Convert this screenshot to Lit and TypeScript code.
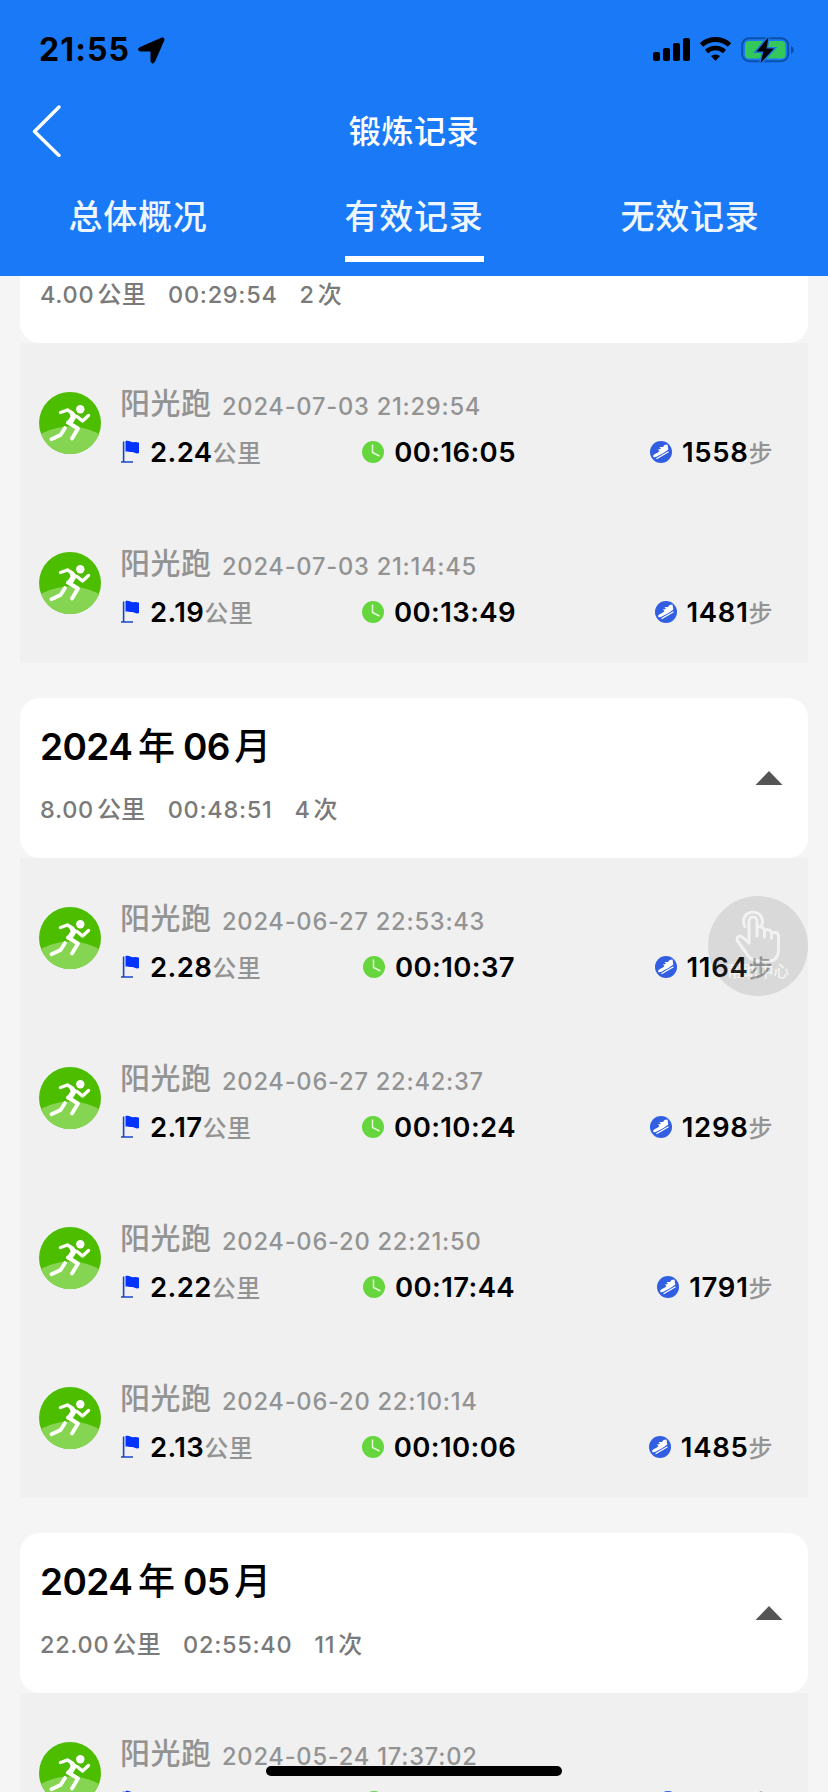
import { LitElement, html, css, svg, nothing } from "lit";
import { customElement, property } from "lit/decorators.js";
import { classMap } from "lit/directives/class-map.js";

interface Run { date: string; km: string; time: string; steps: string; }
interface Month { title?: [string, string]; km: string; time: string; count: string; runs: Run[]; }

// A month without a title is scrolled partly under the header: only its summary line shows.
const MONTHS: Month[] = [
  { km: "4.00", time: "00:29:54", count: "2", runs: [
    { date: "2024-07-03 21:29:54", km: "2.24", time: "00:16:05", steps: "1558" },
    { date: "2024-07-03 21:14:45", km: "2.19", time: "00:13:49", steps: "1481" },
  ] },
  { title: ["2024", "06"], km: "8.00", time: "00:48:51", count: "4", runs: [
    { date: "2024-06-27 22:53:43", km: "2.28", time: "00:10:37", steps: "1164" },
    { date: "2024-06-27 22:42:37", km: "2.17", time: "00:10:24", steps: "1298" },
    { date: "2024-06-20 22:21:50", km: "2.22", time: "00:17:44", steps: "1791" },
    { date: "2024-06-20 22:10:14", km: "2.13", time: "00:10:06", steps: "1485" },
  ] },
  { title: ["2024", "05"], km: "22.00", time: "02:55:40", count: "11", runs: [
    { date: "2024-05-24 17:37:02", km: "2.05", time: "00:15:32", steps: "1517" },
  ] },
];

const runner = svg`<svg width="62" height="62" viewBox="0 0 62 62">
  <circle cx="31" cy="31" r="31" fill="#4dbd00"/>
  <path d="M2 42C20 32 42 32 60 42A31 31 0 0 1 2 42Z" fill="#85d452"/>
  <circle cx="41.300" cy="17.300" r="4.200" fill="#fff"/>
  <path d="M21.500 20.500L28.500 18L34 21.500" fill="none" stroke="#fff" stroke-width="3.400" stroke-linecap="round" stroke-linejoin="round"/>
  <path d="M29 17L38.500 23.500L33 32.500L26.800 31.500L31.500 24.500Z" fill="#fff"/>
  <path d="M38 24.500L43.500 29L49.500 23.500" fill="none" stroke="#fff" stroke-width="3.400" stroke-linecap="round" stroke-linejoin="round"/>
  <path d="M29 30.500L39 36.500L33 46.500" fill="none" stroke="#fff" stroke-width="3.800" stroke-linecap="round" stroke-linejoin="round"/>
  <path d="M26 36L21.500 43L12.500 47.200" fill="none" stroke="#fff" stroke-width="3.800" stroke-linecap="round" stroke-linejoin="round"/>
</svg>`;
const flag = svg`<svg width="20" height="24" viewBox="0 0 20 24">
  <path d="M2.600 1.500V22M0 22H12" fill="none" stroke="#1a44c8" stroke-width="1.600"/>
  <path d="M4.500 1C8-.2 10 2.800 13 2.200C15 1.800 16.500 2.500 18 2.700V13C15.500 14.500 13.500 12 11 12C8.500 12 7 11.500 4.500 11.500Z" fill="#0433ff"/>
</svg>`;
const clock = svg`<svg width="22" height="22" viewBox="0 0 22 22">
  <circle cx="11" cy="11" r="11" fill="#65d63e"/>
  <path d="M10.500 3.500V11.500L17.500 15" fill="none" stroke="#e4fbd9" stroke-width="1.500"/>
</svg>`;
const shoe = svg`<svg width="22" height="22" viewBox="0 0 22 22">
  <circle cx="11" cy="11" r="11" fill="#325fe2"/>
  <path d="M3 15C4 12.500 7.800 12.500 9.500 10L7.800 8.500L11 8L9.500 6L13 6L14.500 4L17.500 3.500L18.300 8.500C15 11.500 10.500 13.500 6.500 15.800C5 16.600 3 16.500 3 15Z" fill="#fff"/>
  <path d="M6.500 17.800L18.500 10.800" stroke="#fff" stroke-width="1.300"/>
</svg>`;

@customElement("status-bar")
export class StatusBar extends LitElement {
  static styles = css`
    :host { display: flex; justify-content: space-between; align-items: center; height: 100px; padding: 0 20px 0 39px; box-sizing: border-box; }
    .side { display: flex; align-items: center; }
    .time { font: 700 32px/40px Inter, sans-serif; color: #000; letter-spacing: 1.1px; width: 99px; }
  `;
  render() {
    return html`
      <div class="side">
        <span class="time">21:55</span>
        <svg width="27" height="27" viewBox="0 0 27 27"><path d="M23.600 1.100L2 10.600C-.2 11.600.1 14 2.600 14H12.300Q13 14 13 14.700V23.800C13 26.500 15.500 26.800 16.600 24.500L25.800 3.300C26.500 1.500 25.300.4 23.600 1.100Z" fill="#000" stroke="#000" stroke-width="1"/></svg>
      </div>
      <div class="side">
        <svg width="155" height="26" viewBox="0 0 155 26">
          <rect x="0" y="15" width="7" height="9" rx="2"/><rect x="10" y="11" width="7" height="13" rx="2"/><rect x="20" y="6" width="7" height="18" rx="2"/><rect x="30" y="1" width="7" height="23" rx="2"/>
          <path d="M48.500 8A20.500 20.500 0 0 1 76.500 8" fill="none" stroke="#000" stroke-width="5"/>
          <path d="M53.500 14.500A13.500 13.500 0 0 1 71.500 14.500" fill="none" stroke="#000" stroke-width="4.600"/>
          <path d="M58 19Q62.500 16 67 19L62.500 24Z" />
          <rect x="89.200" y="1.200" width="46" height="23" rx="7" fill="none" stroke="#0d50ac" stroke-width="2"/>
          <rect x="92" y="4" width="40.500" height="17.500" rx="4" fill="#34c759"/>
          <path d="M138 9Q141 10.500 141 13Q141 15.500 138 17Z" fill="#0d50ac"/>
          <path d="M115.500 0L103.500 14.500H110.500L107.500 26L121 11.500H113.500Z" fill="#000" stroke="#1c78e0" stroke-width="3" paint-order="stroke"/>
        </svg>
      </div>`;
  }
}

@customElement("run-row")
export class RunRow extends LitElement {
  @property({ attribute: false }) run!: Run;
  static styles = css`
    :host { display: flex; gap: 20px; height: 160px; box-sizing: border-box; padding: 43px 35px 0 19px; }
    .badge { padding-top: 6px; height: 62px; }
    .badge svg, .cell svg { display: block; }
    .body { flex: 1; margin-top: -3px; }
    .head { display: flex; height: 37px; align-items: flex-start; color: #939393; white-space: nowrap; }
    .kind { font: 500 30px/44px "Noto Sans CJK SC", sans-serif; letter-spacing: 0.5px; width: 102px; margin: -4px 0 0 -1px; }
    .date { font: 500 23.700px/36px Inter, sans-serif; letter-spacing: 0.75px; margin-top: 6px; }
    .stats { display: grid; grid-template-columns: 207px 222px 1fr; height: 46px; margin-top: 9px; }
    .cell { display: flex; align-items: center; }
    .mid { justify-content: center; }
    .end { justify-content: flex-end; }
    .num { font: 600 27.500px/40px Inter, sans-serif; color: #000; margin-left: 10px; letter-spacing: 0.4px; }
    .first { margin-left: 9px; }
    .end .num { letter-spacing: 0.7px; }
    .unit { font: 500 24px/40px "Noto Sans CJK SC", sans-serif; color: #939393; letter-spacing: 0.5px; margin-top: -1px; }
  `;
  render() {
    const r = this.run;
    return html`
      <div class="badge">${runner}</div>
      <div class="body">
        <div class="head"><span class="kind">阳光跑</span><span class="date">${r.date}</span></div>
        <div class="stats">
          <div class="cell">${flag}<span class="num first">${r.km}</span><span class="unit">公里</span></div>
          <div class="cell mid">${clock}<span class="num">${r.time}</span></div>
          <div class="cell end">${shoe}<span class="num">${r.steps}</span><span class="unit">步</span></div>
        </div>
      </div>`;
  }
}

@customElement("month-group")
export class MonthGroup extends LitElement {
  @property({ attribute: false }) data!: Month;
  static styles = css`
    :host { display: block; background: #f0f0f0; }
    .wrap { background: #f5f5f5; }
    .card { display: flex; justify-content: space-between; align-items: center; height: 160px; box-sizing: border-box; padding: 0 25px 0 21px; background: #fff; border-radius: 20px; }
    .cut { height: 67px; border-radius: 0 0 20px 20px; }
    .text { align-self: flex-end; padding-bottom: 28px; margin-left: -1px; }
    .title { display: flex; align-items: baseline; font: 600 37px/56px Inter, sans-serif; color: #000; letter-spacing: -0.6px; }
    .title .han { font: 500 37px/56px "Noto Sans CJK SC", sans-serif; letter-spacing: 0; }
    .year { width: 98px; }
    .nian { width: 45px; }
    .month { width: 51px; }
    .sum { display: flex; align-items: baseline; font: 500 23.500px/40px Inter, sans-serif; letter-spacing: 0.7px; color: #7a7a7a; margin-top: 15px; }
    .sum .han { font: 500 24px/36px "Noto Sans CJK SC", sans-serif; letter-spacing: 0.4px; margin-left: 3px; }
    .gap { margin-left: 22px; }
    .arrow { display: block; }
  `;
  render() {
    const m = this.data;
    return html`
      <div class="wrap"><div class=${classMap({ card: true, cut: !m.title })}>
        <div class="text">
          ${m.title ? html`<div class="title"><span class="year">${m.title[0]}</span><span class="han nian">年</span><span class="month">${m.title[1]}</span><span class="han">月</span></div>` : nothing}
          <div class="sum"><span>${m.km}</span><span class="han">公里</span><span class="gap">${m.time}</span><span class="gap">${m.count}</span><span class="han">次</span></div>
        </div>
        ${m.title ? html`<svg class="arrow" width="28" height="14" viewBox="0 0 28 14"><path d="M0.500 14L14 0L27.500 14Z" fill="#555"/></svg>` : nothing}
      </div></div>
      ${m.runs.map((r) => html`<run-row .run=${r}></run-row>`)}`;
  }
}

@customElement("app-root")
export class AppRoot extends LitElement {
  static styles = css`
    :host { display: flex; flex-direction: column; position: relative; width: 828px; height: 1792px; overflow: hidden; background: #f5f5f5; }
    .top { flex: none; height: 276px; background: #1a79f7; color: #fff; }
    .nav { display: grid; grid-template-columns: 1fr auto 1fr; align-items: center; height: 62px; padding: 0 32px; font: 500 32px/48px "Noto Sans CJK SC", sans-serif; letter-spacing: 0.6px; }
    .nav span { margin-top: -4px; }
    .tabs { display: grid; grid-template-columns: repeat(3, 1fr); justify-items: center; padding-top: 28px; font: 500 34px/50px "Noto Sans CJK SC", sans-serif; letter-spacing: 0.75px; }
    .tab { height: 66px; border-bottom: 6px solid transparent; color: #eef6ff; }
    .on { border-color: #fff; }
    .view { flex: 1; min-height: 0; overflow: hidden; padding: 0 20px; }
    .list { display: flex; flex-direction: column; gap: 35px; }
    .float { position: absolute; left: 708px; top: 896px; width: 100px; height: 100px; border-radius: 50%; background: #747474; opacity: 0.18; display: flex; flex-direction: column; align-items: center; }
    .float svg { margin-top: 14px; flex: none; }
    .cap { font: 500 15.500px/20px "Noto Sans CJK SC", sans-serif; color: #fff; margin-top: -3px; }
    .home { position: absolute; left: 266px; top: 1766px; width: 296px; height: 10px; border-radius: 5px; background: #000; }
  `;
  render() {
    return html`
      <div class="top">
        <status-bar></status-bar>
        <div class="nav">
          <svg width="30" height="52" viewBox="0 0 30 52"><path d="M27 2L2.500 26.500L27 50.500" fill="none" stroke="#fff" stroke-width="3.400" stroke-linecap="round" stroke-linejoin="round"/></svg>
          <span>锻炼记录</span><span></span>
        </div>
        <div class="tabs"><div class="tab">总体概况</div><div class="tab on">有效记录</div><div class="tab">无效记录</div></div>
      </div>
      <div class="view"><div class="list">${MONTHS.map((m) => html`<month-group .data=${m}></month-group>`)}</div></div>
      <div class="float">
        <svg width="50" height="53" viewBox="0 0 50 53" fill="none" stroke="#fff" stroke-width="3" stroke-linecap="round" stroke-linejoin="round">
          <path d="M12 16.500A9.500 9.500 0 1 1 28 16.500"/>
          <path d="M16 33V11A4 4 0 0 1 24 11V26M24 17Q31 16 31.500 21V27M31.500 20Q38 18.500 38.500 23.500V28M38.500 22.500H42Q45.500 22.500 45.500 26.500V40Q45 51 36 51H25Q17 50 14 44L4.500 31Q3 26.500 7 26Q9 26 16 33"/>
        </svg>
        <span class="cap">帮助中心</span>
      </div>
      <div class="home"></div>`;
  }
}
